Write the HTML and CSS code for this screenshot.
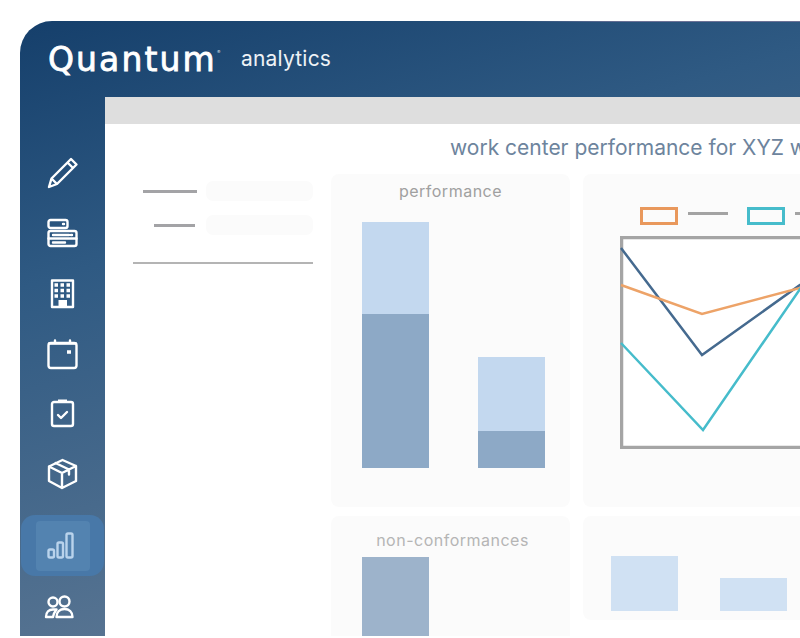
FILE: index.html
```html
<!DOCTYPE html>
<html lang="en">
<head>
  <meta charset="UTF-8" />
  <title>Quantum analytics</title>
  <link rel="stylesheet" href="styles.css">
</head>
<body>
  <div class="frame">
    <!-- top bar -->
    <header class="topbar">
      <span class="logo">Quantum<sup class="logo-mark">®</sup></span>
      <span class="product">analytics</span>
    </header>

    <div class="app">
      <!-- icon rail -->
      <nav class="rail">
        <a class="rail-item">
          <svg class="icon" viewBox="0 0 32 32"><path d="M3 30l2.500-8.500L25 2l5.500 5.500L11 27zM5.500 21.500L11 27M21.500 5.500L27 11"/></svg>
        </a>
        <a class="rail-item">
          <svg class="icon" viewBox="0 0 32 32"><rect x="2.500" y="3" width="19" height="8" rx="2"/><rect x="2.500" y="14" width="28" height="15" rx="2"/><path d="M2.500 21.500h28M7 18h16M7 25.500h12M17 7h1M25 18h1"/></svg>
        </a>
        <a class="rail-item">
          <svg class="icon" viewBox="0 0 32 32"><path d="M6 30V3.500h21V30z"/><path class="solid" d="M12.500 30v-7h8.500v7z"/><path class="dots" d="M8.500 8h3.500M14.500 8h3.500M20.500 8h3.500M8.500 13.500h3.500M14.500 13.500h3.500M20.500 13.500h3.500M8.500 19h3.500M14.500 19h3.500M20.500 19h3.500"/></svg>
        </a>
        <a class="rail-item">
          <svg class="icon" viewBox="0 0 32 32"><rect x="2.500" y="5" width="28" height="25" rx="2.500"/><path d="M9 2.500v3M24 2.500v3M3 5.500h27"/><path class="dots" d="M21 14h4"/></svg>
        </a>
        <a class="rail-item">
          <svg class="icon" viewBox="0 0 32 32"><rect x="6" y="4" width="21" height="24" rx="2"/><path class="solid" d="M12 1.500h9V5h-9z"/><path d="M12 17l3 3 6-6"/></svg>
        </a>
        <a class="rail-item">
          <svg class="icon" viewBox="0 0 32 32"><path d="M16.500 2l13.500 6v15l-14 7-13-7V8.500zM3 8.500l13 6.500 14-7M16 15v15M9.500 5l13.500 6.500v5"/></svg>
        </a>
        <a class="rail-item rail-item-active">
          <span class="rail-inner">
            <svg class="icon" viewBox="0 0 32 32"><rect x="1.500" y="19.500" width="5.500" height="8" rx="1.500"/><rect x="10.500" y="12.500" width="5.500" height="15" rx="1.500"/><rect x="19.500" y="3.500" width="6" height="24" rx="1.500"/></svg>
          </span>
        </a>
        <a class="rail-item">
          <svg class="icon" viewBox="0 0 32 32"><circle cx="7" cy="12" r="4.500"/><circle cx="18.500" cy="11.500" r="5"/><path d="M0 27c0-5 3-7.500 7-7.500h3.500C8.500 22 7.500 24 7 27zM10.500 27c0-5 3.500-8 8-8s8 3 8 8z"/></svg>
        </a>
      </nav>

      <main class="main">
        <div class="strip"></div>
        <h1 class="title">work center performance for XYZ w</h1>

        <div class="board">
          <!-- filters -->
          <aside class="filters">
            <div class="filter-row">
              <span class="filter-line"></span>
              <span class="filter-pill"></span>
            </div>
            <div class="filter-row filter-row-short">
              <span class="filter-line"></span>
              <span class="filter-pill"></span>
            </div>
            <hr class="filter-rule">
          </aside>

          <section class="panel">
            <h2 class="panel-title">performance</h2>
            <div class="bars">
              <div class="bar">
                <div class="bar-light bar-part-a"></div>
                <div class="bar-dark bar-part-b"></div>
              </div>
              <div class="bar">
                <div class="bar-light bar-part-c"></div>
                <div class="bar-dark bar-part-d"></div>
              </div>
            </div>
          </section>

          <section class="panel panel-chart">
            <div class="legend">
              <span class="swatch swatch-orange"></span>
              <span class="legend-line"></span>
              <span class="swatch swatch-teal"></span>
              <span class="legend-line"></span>
            </div>
            <svg class="plot" viewBox="0 0 300 213">
              <rect x="1.500" y="1.500" width="290" height="210" class="plot-box"/>
              <polyline points="1,12 82,119 180,49 300,20" class="line-navy"/>
              <polyline points="1,49 82,78 180,52 300,30" class="line-orange"/>
              <polyline points="1,107 83,194 180,53 300,70" class="line-teal"/>
            </svg>
          </section>

          <section class="panel panel-low">
            <h2 class="panel-title panel-title-low">non-conformances</h2>
            <div class="nc-bar"></div>
          </section>

          <section class="panel panel-short">
            <div class="mini-bar mini-bar-a"></div>
            <div class="mini-bar mini-bar-b"></div>
          </section>
        </div>
      </main>
    </div>
  </div>
</body>
</html>
```

FILE: styles.css
```css
* {
  margin: 0;
  padding: 0;
  box-sizing: border-box;
}

body {
  width: 800px;
  height: 638px;
  overflow: hidden;
  background-color: #fff;
  font-family: "Inter", "Liberation Sans", sans-serif;
  padding: 21px 0 0 20px;
}

/* outer device frame, runs off the right edge */
.frame {
  width: 900px;
  height: 615px;
  border-radius: 32px 0 0 0;
  overflow: hidden;
  background: linear-gradient(163deg, #153f6b 0%, #2f5a83 30%, #567391 72%, #64809c 100%);
  display: flex;
  flex-direction: column;
}

.topbar {
  height: 76px;
  flex: none;
  display: flex;
  align-items: center;
  padding: 0 0 0 28px;
  color: #fff;
  border-top: 1px solid;
  border-image: linear-gradient(90deg, transparent 55%, #6c7296 68%) 1;
}

.logo {
  font-family: "DejaVu Sans", sans-serif;
  font-size: 33px;
  font-weight: 400;
  letter-spacing: 2.100px;
  -webkit-text-stroke: 0.8px #fff;
  white-space: nowrap;
  width: 193px;
}

.logo-mark {
  font-size: 4px;
  letter-spacing: 0;
  -webkit-text-stroke: 0;
  vertical-align: 18px;
}

.product {
  font-size: 21px;
  font-weight: 400;
  letter-spacing: 0.2px;
  color: #eef2f6;
  margin-top: -2px;
}

.app {
  flex: 1;
  display: flex;
  min-height: 0;
}

/* icon rail */
.rail {
  width: 85px;
  flex: none;
  display: flex;
  flex-direction: column;
  align-items: center;
  padding-top: 46px;
}

.rail-item {
  height: 60px;
  width: 100%;
  flex: none;
  display: flex;
  align-items: center;
  justify-content: center;
  padding-right: 1px;
}

.rail-item:nth-child(4) {
  margin-top: 1px;
}

.rail-item:nth-child(7) {
  margin-top: 11px;
}

.rail-item-active {
  height: 61px;
  width: 83px;
  padding-right: 0;
  border-radius: 14px;
  background: #4878a8;
}

.rail-inner {
  width: 54px;
  height: 50px;
  border-radius: 4px;
  background: #5383b0;
  display: flex;
  align-items: center;
  justify-content: center;
}

.icon {
  width: 32px;
  height: 32px;
  overflow: visible;
  fill: none;
  stroke: #fff;
  stroke-width: 2.400;
  stroke-linejoin: round;
  stroke-linecap: round;
}

.rail-item-active .icon {
  stroke: #b9d3ec;
}

.solid {
  fill: #fff;
  stroke: none;
}

.dots {
  stroke-width: 3.500;
  stroke-linecap: butt;
}

/* main area */
.main {
  flex: 1;
  min-width: 0;
  background-color: #fff;
  display: flex;
  flex-direction: column;
}

.strip {
  height: 27px;
  flex: none;
  background-color: #dedede;
}

.title {
  height: 50px;
  flex: none;
  padding-left: 345px;
  font-size: 21px;
  font-weight: 400;
  line-height: 47px;
  white-space: nowrap;
  color: #6d849d;
}

.board {
  flex: 1;
  min-height: 0;
  display: grid;
  grid-template-columns: 185px 239px 300px;
  grid-template-rows: 333px 104px;
  column-gap: 13px;
  row-gap: 9px;
  padding-left: 28px;
  align-items: start;
}

/* filters */
.filters {
  grid-row: 1 / 3;
  padding-top: 7px;
  width: 180px;
}

.filter-row {
  display: flex;
  align-items: center;
  justify-content: flex-end;
  gap: 9px;
  height: 20px;
  margin-bottom: 14px;
}

.filter-line {
  width: 54px;
  height: 3px;
  background-color: #a3a3a6;
}

.filter-row-short .filter-line {
  width: 41px;
  margin-right: 2px;
}

.filter-pill {
  width: 107px;
  height: 20px;
  border-radius: 7px;
  background-color: #fbfbfb;
}

.filter-rule {
  border: none;
  height: 2px;
  margin-top: 27px;
  background-color: #b4b4b4;
}

/* panels */
.panel {
  border-radius: 8px;
  background-color: #fbfbfb;
  height: 100%;
}

.panel-title {
  font-size: 16px;
  font-weight: 400;
  text-align: center;
  letter-spacing: 0.5px;
  color: #a0a0a0;
  padding-top: 7px;
  height: 48px;
}

.panel-title-low {
  height: 41px;
  padding: 14px 0 0 4px;
  color: #b5b5b5;
}

.bars {
  display: flex;
  align-items: flex-end;
  gap: 49px;
  padding-left: 31px;
  height: 246px;
}

.bar {
  width: 67px;
  display: flex;
  flex-direction: column;
}

.bar-light { background-color: #c3d8ef; }
.bar-dark { background-color: #8da9c6; }

.bar-part-a { height: 92px; }
.bar-part-b { height: 154px; }
.bar-part-c { height: 74px; }
.bar-part-d { height: 37px; }

/* line chart */
.panel-chart {
  overflow: hidden;
  padding: 33px 0 0 37px;
}

.legend {
  display: flex;
  align-items: flex-start;
  height: 29px;
  padding-left: 20px;
}

.swatch {
  width: 38px;
  height: 18px;
  border: 3px solid;
}

.swatch-orange { border-color: #e9985c; }
.swatch-teal { border-color: #46bccb; }

.legend-line {
  width: 40px;
  height: 3px;
  margin: 5px 19px 0 10px;
  background-color: #a3a3a3;
}

.plot {
  display: block;
  width: 300px;
  height: 213px;
}

.plot-box {
  fill: #fff;
  stroke: #a5a5a5;
  stroke-width: 3.500;
}

.plot polyline {
  fill: none;
  stroke-width: 2.500;
}

.line-navy { stroke: #456a8f; }
.line-orange { stroke: #eda368; }
.line-teal { stroke: #46bccb; }

.panel-low {
  overflow: hidden;
  height: 140px;
}

.nc-bar {
  width: 67px;
  height: 90px;
  margin-left: 31px;
  background-color: #9db3cb;
}

.panel-short {
  display: flex;
  align-items: flex-end;
  gap: 42px;
  padding: 0 0 9px 28px;
}

.mini-bar {
  width: 67px;
  background-color: #d0e1f3;
}

.mini-bar-a { height: 55px; }
.mini-bar-b { height: 33px; }
```
